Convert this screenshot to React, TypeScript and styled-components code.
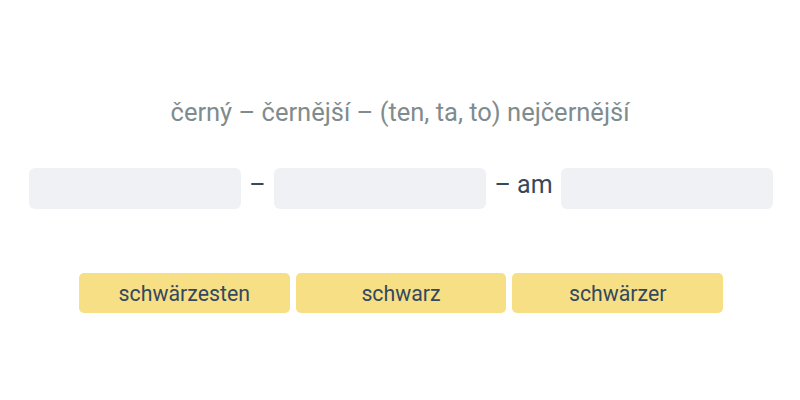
import React from "react";
import styled, { createGlobalStyle } from "styled-components";

const Global = createGlobalStyle`
  body {
    margin: 0;
    background: #ffffff;
    font-family: Roboto, "Liberation Sans", sans-serif;
  }
`;

const Page = styled.div`
  width: 800px;
  height: 400px;
  display: flex;
  flex-direction: column;
  align-items: center;
  padding-top: 95px;
  box-sizing: border-box;
`;

const Prompt = styled.div`
  font-size: 25.5px;
  line-height: 34px;
  color: #7f8c8d;
`;

const Sentence = styled.div`
  margin-top: 39px;
  margin-left: 2px;
  display: flex;
  align-items: center;
  color: #34495e;
  font-size: 25px;
`;

const Gap = styled.div`
  width: 212px;
  height: 41px;
  border-radius: 6px;
  background: #f0f1f5;
`;

const Sep = styled.span<{ $w: number }>`
  width: ${(p) => p.$w}px;
  text-align: center;
  white-space: nowrap;
  line-height: 41px;
  margin-top: -8px;
`;

const Options = styled.div`
  margin-top: 64px;
  margin-left: 2px;
  display: flex;
  gap: 6px;
`;

const Chip = styled.button`
  width: 210.7px;
  height: 40px;
  border: none;
  border-radius: 5px;
  background: #f7df85;
  color: #34495e;
  font-family: Roboto, "Liberation Sans", sans-serif;
  font-size: 21.3px;
  padding: 0;
  cursor: pointer;
`;

export default function App() {
  return (
    <>
      <Global />
      <Page>
        <Prompt>černý – černější – (ten, ta, to) nejčernější</Prompt>
        <Sentence>
          <Gap />
          <Sep $w={33}>–</Sep>
          <Gap />
          <Sep $w={75}>– am</Sep>
          <Gap />
        </Sentence>
        <Options>
          <Chip>schwärzesten</Chip>
          <Chip>schwarz</Chip>
          <Chip>schwärzer</Chip>
        </Options>
      </Page>
    </>
  );
}
